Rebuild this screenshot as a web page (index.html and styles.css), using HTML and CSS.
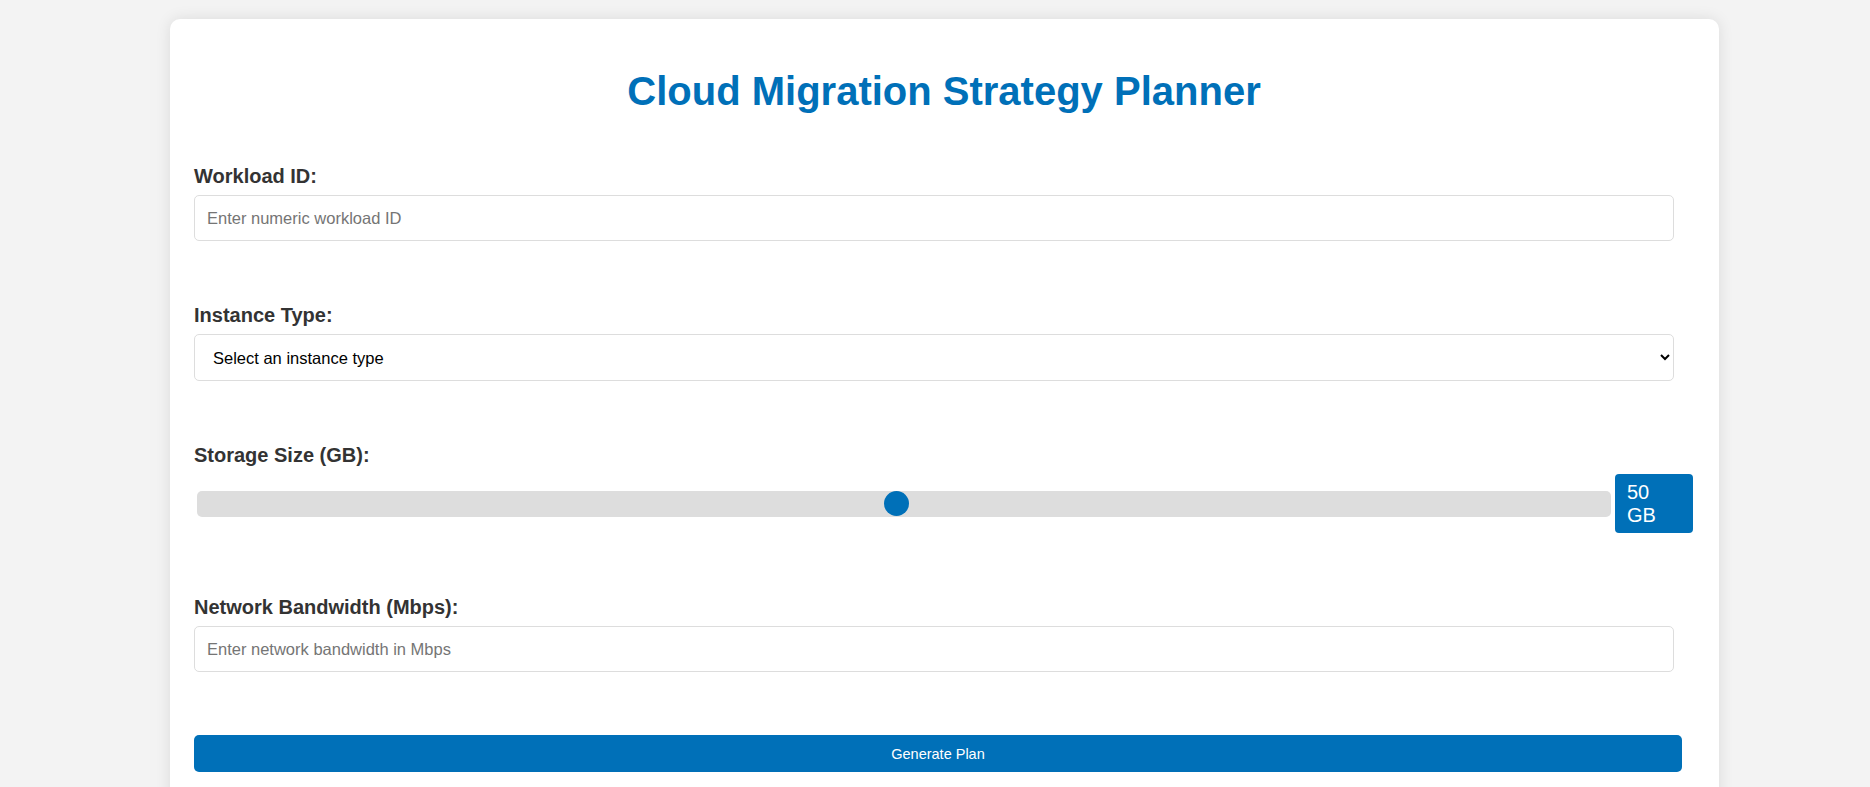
FILE: index.html
```html
<!DOCTYPE html>
<html lang="en">
<head>
<meta charset="utf-8">
<title>Cloud Migration Strategy Planner</title>
<link rel="stylesheet" href="styles.css">
</head>
<body>
<div class="page">
  <main class="card">
    <h1 class="title">Cloud Migration Strategy Planner</h1>
    <form class="form">
      <div class="group">
        <label class="label" for="workload">Workload ID:</label>
        <input class="field" id="workload" type="text" placeholder="Enter numeric workload ID">
      </div>
      <div class="group">
        <label class="label" for="instance">Instance Type:</label>
        <select class="field select" id="instance">
          <option>Select an instance type</option>
          <option>t3.micro</option>
          <option>m5.large</option>
        </select>
      </div>
      <div class="group">
        <label class="label" for="storage">Storage Size (GB):</label>
        <div class="slider-row">
          <input class="range" id="storage" type="range" min="1" max="100" value="50">
          <span class="badge">50 GB</span>
        </div>
      </div>
      <div class="group">
        <label class="label" for="bandwidth">Network Bandwidth (Mbps):</label>
        <input class="field" id="bandwidth" type="text" placeholder="Enter network bandwidth in Mbps">
      </div>
      <button class="submit" type="button">Generate Plan</button>
    </form>
  </main>
</div>
</body>
</html>
```

FILE: styles.css
```css
html, body {
  margin: 0;
  padding: 0;
  background: #f3f3f3;
  font-family: "Liberation Sans", Arial, sans-serif;
}

.page {
  padding: 19px 151px 0 170px;
}

.card {
  background: #ffffff;
  border-radius: 10px;
  box-shadow: 0 0 15px rgba(0, 0, 0, 0.1);
  padding: 25px 25px 40px 24px;
}

.title {
  margin: 25px 0 51px;
  font-size: 40px;
  line-height: 45px;
  font-weight: bold;
  color: #0070b8;
  text-align: center;
}

.form {
  display: flex;
  flex-direction: column;
  gap: 63px;
  margin: 0;
}

.group {
  display: flex;
  flex-direction: column;
  align-items: flex-start;
}

.label {
  display: block;
  font-size: 20px;
  line-height: 23px;
  font-weight: bold;
  color: #333333;
  margin-bottom: 7px;
}

.field {
  box-sizing: border-box;
  width: calc(100% - 20px);
  height: 46px;
  padding: 0 12px;
  margin: 0;
  border: 1px solid #dddddd;
  border-radius: 5px;
  background: #ffffff;
  font-family: "Liberation Sans", Arial, sans-serif;
  font-size: 16.5px;
  color: #000000;
  outline: none;
}

.field::placeholder {
  color: #757575;
}

.select {
  height: 47px;
  padding-left: 14px;
}

.slider-row {
  display: flex;
  align-items: center;
  width: 100%;
}

.range {
  -webkit-appearance: none;
  appearance: none;
  flex: 1;
  min-width: 0;
  height: 26px;
  margin: 0 4px 0 3px;
  background: #dddddd;
  border-radius: 5px;
  outline: none;
}

.range::-webkit-slider-thumb {
  -webkit-appearance: none;
  appearance: none;
  width: 25px;
  height: 25px;
  border-radius: 50%;
  background: #0070b8;
  border: none;
}

.badge {
  box-sizing: border-box;
  flex-shrink: 0;
  width: 78px;
  height: 59px;
  margin-right: 1px;
  padding: 7px 12px;
  background: #0070b8;
  color: #ffffff;
  font-size: 20px;
  line-height: 23px;
  border-radius: 4px;
}

.submit {
  box-sizing: border-box;
  width: calc(100% - 12px);
  height: 37px;
  border: none;
  border-radius: 5px;
  background: #0070b8;
  color: #ffffff;
  font-family: "Liberation Sans", Arial, sans-serif;
  font-size: 14.5px;
  cursor: pointer;
}
```
